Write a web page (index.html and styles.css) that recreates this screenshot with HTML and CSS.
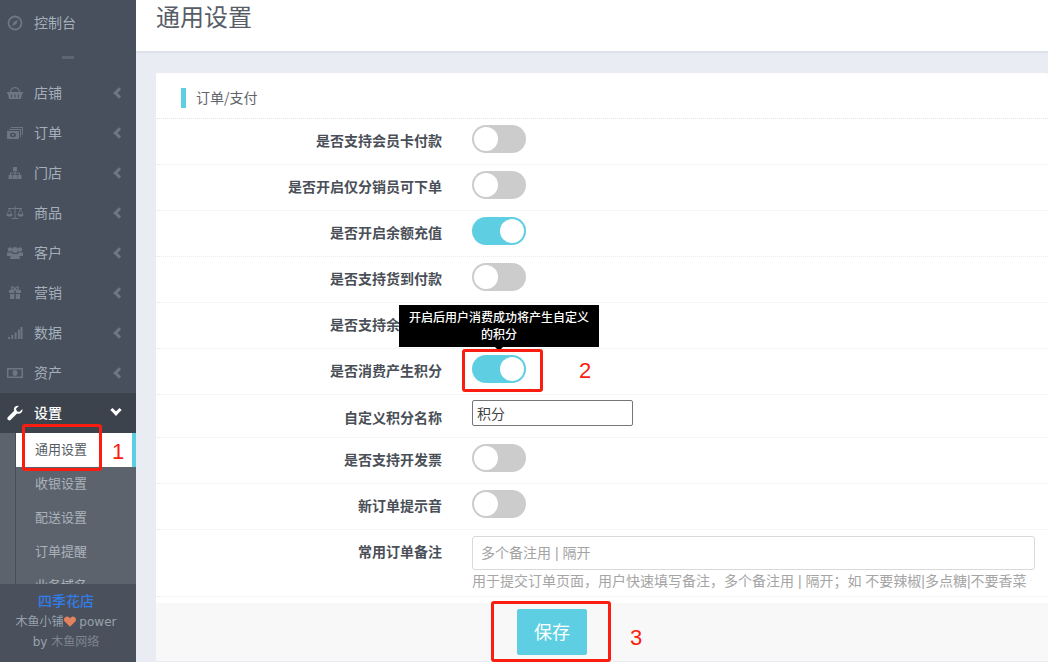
FILE: index.html
```html
<!DOCTYPE html>
<html lang="zh-CN">
<head>
<meta charset="utf-8">
<title>通用设置</title>
<link rel="stylesheet" href="styles.css">
</head>
<body>
<div class="app">
  <aside class="sidebar">
    <nav class="nav">
      <a class="nav-item top"><svg class="ico" viewBox="0 0 16 16"><circle cx="8" cy="8" r="6.500" fill="none" stroke="currentColor" stroke-width="1.800"/><path d="M11 5 9.200 9.200 5 11l1.800-4.200z" fill="currentColor"/></svg><span>控制台</span></a>
      <div class="nav-sep"></div>
      <a class="nav-item"><svg class="ico" viewBox="0 0 16 16"><path d="M3 7a5 5 0 0 1 10 0h-1.300a3.700 3.700 0 0 0-7.400 0z" fill="currentColor"/><path d="M0 7h16v1.500h-.8L14 14H2L.8 8.500H0z" fill="currentColor"/><path d="M4.500 9.500v3M8 9.500v3M11.500 9.500v3" stroke="#47505c"/></svg><span>店铺</span><i class="chev"></i></a>
      <a class="nav-item"><svg class="ico" viewBox="0 0 18 16"><path d="M5 2h12v8h-1V3H5zM3 4h12v8h-1V5H3z" fill="currentColor"/><path d="M1 6h12v8H1z" fill="currentColor"/><ellipse cx="7" cy="10" rx="3" ry="2.200" fill="#47505c"/><circle cx="7" cy="10" r="1.100" fill="currentColor"/></svg><span>订单</span><i class="chev"></i></a>
      <a class="nav-item"><svg class="ico" viewBox="0 0 16 16"><path d="M6 2h4v4H8.500v1.500H13V10h1.500v4h-4v-4H12V8.500H8.500V10H10v4H6v-4h1.500V8.500H4V10h1.500v4h-4v-4H3V7.500h4.500V6H6z" fill="currentColor"/></svg><span>门店</span><i class="chev"></i></a>
      <a class="nav-item"><svg class="ico" viewBox="0 0 18 16"><path d="M8.500 1h1v12h3v1h-7v-1h3zM2 3h14v1H2z" fill="currentColor"/><path d="M3.500 4 1 9.500h5zM14.500 4 12 9.500h5z" fill="none" stroke="currentColor" stroke-width=".8"/><path d="M.5 9.500h6a3 2 0 0 1-6 0zM11.500 9.500h6a3 2 0 0 1-6 0z" fill="currentColor"/></svg><span>商品</span><i class="chev"></i></a>
      <a class="nav-item"><svg class="ico" viewBox="0 0 18 16"><circle cx="4" cy="4.500" r="2.200" fill="currentColor"/><circle cx="14" cy="4.500" r="2.200" fill="currentColor"/><circle cx="9" cy="5" r="3" fill="currentColor"/><path d="M1 7.500h5v3.500H1zM12 7.500h5v3.500h-5z" fill="currentColor"/><path d="M5 9h8l1 5H4z" fill="currentColor"/></svg><span>客户</span><i class="chev"></i></a>
      <a class="nav-item"><svg class="ico" viewBox="0 0 16 16"><path d="M2 5h5.300v3H2zM8.700 5H14v3H8.700zM3 9h4.300v5H3zM8.700 9H13v5H8.700z" fill="currentColor"/><path d="M8 5C5 5 4 3.800 4.500 2.500 5.200 1 7.500 2 8 5c.5-3 2.800-4 3.500-2.500C12 3.800 11 5 8 5z" fill="none" stroke="currentColor" stroke-width="1.200"/></svg><span>营销</span><i class="chev"></i></a>
      <a class="nav-item"><svg class="ico" viewBox="0 0 16 16"><path d="M1 12h2v2H1zM4.300 10h2v4h-2zM7.600 7.500h2V14h-2zM10.900 4.500h2V14h-2zM13.500 2H15.500V14h-2z" fill="currentColor"/></svg><span>数据</span><i class="chev"></i></a>
      <a class="nav-item"><svg class="ico" viewBox="0 0 16 16"><path d="M0 3h16v10H0zm1.500 1.500v7h13v-7z" fill="currentColor" fill-rule="evenodd"/><ellipse cx="8" cy="8" rx="2.500" ry="3" fill="currentColor"/></svg><span>资产</span><i class="chev"></i></a>
      <a class="nav-item active"><svg class="ico" viewBox="0 0 16 16"><path d="M15.200 4.200 12.300 7l-2.500-.8L9 3.700 11.800.9C9.700.2 7.500 1.300 7 3.300c-.2.900-.1 1.700.2 2.400L1 12a1.900 1.900 0 0 0 2.800 2.800l6.300-6.200c2.500.9 5.400-1 5.400-3.500 0-.3 0-.6-.3-.9z" fill="currentColor"/></svg><span>设置</span><i class="chev down"></i></a>
      <div class="subnav">
        <a class="sub-item current">通用设置</a>
        <a class="sub-item">收银设置</a>
        <a class="sub-item">配送设置</a>
        <a class="sub-item">订单提醒</a>
        <a class="sub-item">业务域名</a>
      </div>
    </nav>
    <footer class="side-foot">
      <div class="shop">四季花店</div>
      <div class="power">木鱼小铺<svg class="heart" viewBox="0 0 16 14"><path d="M8 14 1.300 7.300A4 4 0 0 1 7 1.600l1 1 1-1a4 4 0 0 1 5.700 5.700z"/></svg> power</div>
      <div class="by">by <span>木鱼网络</span></div>
    </footer>
  </aside>
  <main class="main">
    <header class="page-head"><h1>通用设置</h1></header>
    <section class="content">
      <div class="card">
        <h2 class="card-title"><span>订单/支付</span></h2>
        <div class="row"><label>是否支持会员卡付款</label><div class="switch"></div></div>
        <div class="row"><label>是否开启仅分销员可下单</label><div class="switch"></div></div>
        <div class="row"><label>是否开启余额充值</label><div class="switch on"></div></div>
        <div class="row"><label>是否支持货到付款</label><div class="switch"></div></div>
        <div class="row"><label>是否支持余额付款</label><div class="switch"></div></div>
        <div class="row"><label>是否消费产生积分</label><div class="switch on"></div>
          <div class="tip">开启后用户消费成功将产生自定义的积分</div>
          <div class="mark mark-2"></div><b class="num num-2">2</b>
        </div>
        <div class="row row-input"><label>自定义积分名称</label><input class="name-input" type="text" value="积分"></div>
        <div class="row"><label>是否支持开发票</label><div class="switch"></div></div>
        <div class="row"><label>新订单提示音</label><div class="switch"></div></div>
        <div class="row row-note"><label>常用订单备注</label>
          <div class="note">
            <input class="note-input" type="text" placeholder="多个备注用 | 隔开">
            <p>用于提交订单页面，用户快速填写备注，多个备注用 | 隔开；如 不要辣椒|多点糖|不要香菜</p>
          </div>
        </div>
        <div class="actions"><button class="save">保存</button><div class="mark mark-3"></div><b class="num num-3">3</b></div>
      </div>
    </section>
  </main>
  <div class="mark mark-1"></div><b class="num num-1">1</b>
</div>
</body>
</html>
```
FILE: styles.css
```css
* { box-sizing: border-box; }
html, body { margin: 0; height: 100%; overflow: hidden; }
body { font-family: "Noto Sans CJK SC", "Liberation Sans", sans-serif; font-size: 14px; color: #4a4f57; background: #e9edf3; }
.app { position: relative; display: flex; width: 1048px; height: 662px; overflow: hidden; }

.sidebar { width: 136px; flex: none; display: flex; flex-direction: column; background: #47505c; }
.nav { flex: 1; min-height: 0; overflow: hidden; padding-top: 3px; }
.nav-item { display: flex; align-items: center; height: 40px; padding-left: 6px; color: #a4afbb; position: relative; }
.nav-item span { margin-left: 10px; line-height: 20px; margin-top: -2px; }
.ico { width: 18px; height: 16px; flex: none; color: #6d7682; }
.nav-sep { height: 30px; display: flex; align-items: center; justify-content: center; }
.nav-sep::before { content: ""; width: 12px; height: 3px; background: #5d6670; margin-top: -2px; }
.chev { position: absolute; left: 115px; top: 16px; width: 8px; height: 8px; border-left: 3px solid #6d7682; border-bottom: 3px solid #6d7682; transform: rotate(45deg); }
.chev.down { left: 112px; top: 13px; border-color: #fff; transform: rotate(-45deg); }
.nav-item.active { background: #3c434d; color: #fff; font-weight: 500; }
.nav-item.active .ico { color: #fff; }
.subnav { background: #5c636d; padding-left: 16px; height: 200px; }
.sub-item { display: flex; align-items: center; height: 34px; padding-left: 19px; padding-bottom: 3px; font-size: 13px; color: #aab2bb; box-shadow: -1px 0 0 #474d57; }
.sub-item.current { background: #fff; color: #555b63; border-right: 4px solid #5ecfe2; }
.side-foot { height: 78px; flex: none; background: #4a515c; text-align: center; padding: 6px 4px 0 0; color: #98a2ad; font-size: 12px; line-height: 20px; }
.side-foot > div { height: 20px; white-space: nowrap; }
.side-foot .shop { color: #337ce8; font-size: 14px; font-weight: 500; margin-bottom: 2px; }
.side-foot .power, .side-foot .by { font-family: "DejaVu Sans", "Noto Sans CJK SC", sans-serif; }
.side-foot .by span { color: #7d8590; }
.heart { width: 12px; height: 11px; fill: #e2825f; vertical-align: -1px; }

.main { flex: 1; min-width: 0; display: flex; flex-direction: column; }
.page-head { height: 53px; flex: none; background: #fff; border-bottom: 2px solid #dde1ea; padding-left: 20px; }
.page-head h1 { margin: -1px 0 0; font-size: 24px; font-weight: 400; line-height: 34px; color: #575d66; }
.content { flex: 1; padding: 20px 0 0 20px; }
.card { background: #fff; height: 588px; border-radius: 2px; }
.card-title { margin: 0; height: 46px; padding: 15px 0 0 25px; font-size: 14px; font-weight: 400; line-height: 18px; color: #5f646b; border-bottom: 1px dotted #e2e4e8; }
.card-title span { display: block; border-left: 5px solid #5ecfe2; padding-left: 10px; height: 20px; }

.row { position: relative; display: flex; align-items: flex-start; height: 46px; border-bottom: 1px dotted #e8eaed; padding-top: 6px; }
.row label { width: 286px; flex: none; text-align: right; font-weight: 700; color: #4a4f57; line-height: 20px; margin-top: 5px; }
.switch { position: relative; width: 54px; height: 28px; margin-left: 30px; border-radius: 14px; background: #ccc; }
.switch::after { content: ""; position: absolute; left: 2px; top: 2px; width: 24px; height: 24px; border-radius: 50%; background: #fff; }
.switch.on { background: #5ecfe2; }
.switch.on::after { left: 28px; }
.row-input { height: 43px; padding-top: 5px; }
.row-input label { margin-top: 7px; }
.name-input { width: 161px; height: 26px; margin-left: 30px; border: 1px solid #767676; border-radius: 2px; padding: 0 4px; font: inherit; color: #444; background: #fff; outline: 0; }
.row-note { height: 67px; padding-top: 6px; }
.row-note label { margin-top: 5px; }
.note { margin-left: 30px; width: 563px; }
.note-input { display: block; width: 563px; height: 34px; border: 1px solid #d9d9d9; border-radius: 3px; padding: 0 8px; font: 14px "Liberation Sans", "Noto Sans CJK SC", sans-serif; background: #fff; outline: 0; }
.note-input::placeholder { color: #a3a3a3; }
.note p { margin: 1px 0 0; font: 14px/20px "Liberation Sans", "Noto Sans CJK SC", sans-serif; color: #a5a5a5; white-space: nowrap; }
.actions { position: relative; margin-top: 6px; height: 58px; background: #f8f8f8; padding: 6px 0 0 361px; }
.save { width: 70px; height: 46px; border: 0; border-radius: 2px; background: #5ecfe2; color: #fff; font: inherit; font-size: 18px; padding: 0 0 3px; }

.tip { position: absolute; left: 243px; bottom: 47px; width: 200px; background: #000; color: #fff; font-size: 12px; font-weight: 500; line-height: 17px; text-align: center; padding: 3px 10px 5px; z-index: 2; }
.tip::after { content: ""; position: absolute; left: 95px; bottom: -4px; border: 5px solid transparent; border-top-color: #000; border-bottom: 0; }
.mark { position: absolute; border: 3px solid #fb1d10; border-radius: 3px; z-index: 3; }
.mark-1 { left: 22px; top: 424px; width: 80px; height: 47px; }
.mark-2 { left: 306px; top: 0; width: 81px; height: 43px; }
.mark-3 { left: 335px; top: -2px; width: 120px; height: 61px; }
.num { position: absolute; color: #fb1d10; font: 400 22px/26px "Liberation Sans", sans-serif; z-index: 3; }
.num-1 { left: 112px; top: 439px; }
.num-2 { left: 423px; top: 9px; }
.num-3 { left: 474px; top: 22px; }
```
